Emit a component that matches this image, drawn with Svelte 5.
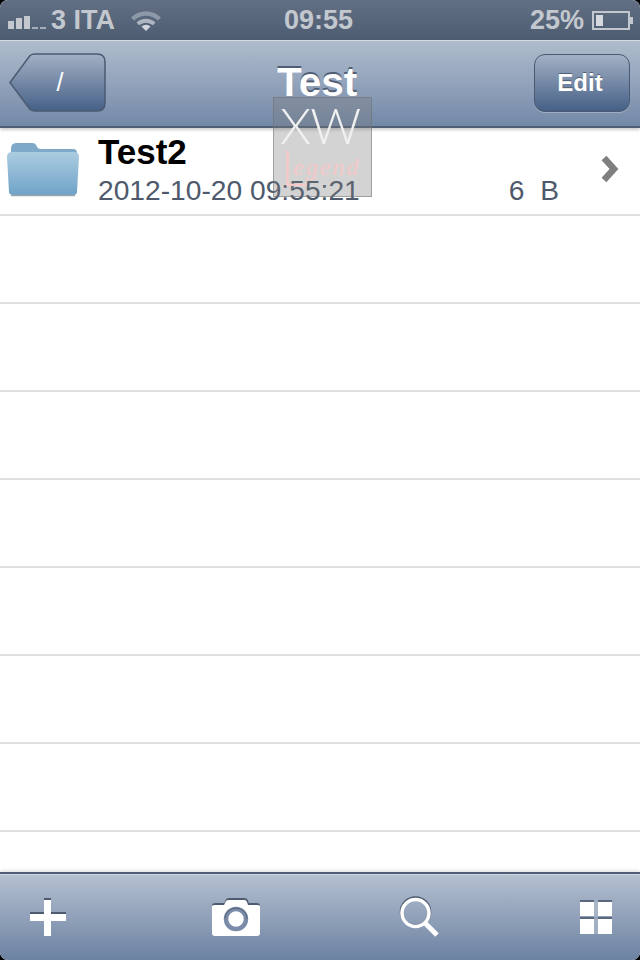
<script>
  const rows = [0, 1, 2, 3, 4, 5, 6, 7];
</script>

<div class="phone">
  <header class="status">
    <div class="side">
      <div class="signal">
        <i class="b1"></i><i class="b2"></i><i class="b3"></i><i class="b4"></i><i class="b5"></i>
      </div>
      <span class="carrier">3 ITA</span>
      <svg class="wifi" width="32" height="22" viewBox="0 0 32 22">
        <path d="M1 8.500C9.500 0 22.500 0 31 8.500L28 11.500C21 5 11 5 4 11.500Z" fill="#8e99a8"/>
        <path d="M6.500 13.500C12 8.500 20 8.500 25.500 13.500L22.800 16.300C18.500 12.800 13.500 12.800 9.200 16.300Z" fill="#aeb6c1"/>
        <path d="M11.500 17.500C14.500 15.300 17.500 15.300 20.500 17.500L16 22Z" fill="#d2d6dc"/>
      </svg>
    </div>
    <span class="clock">09:55</span>
    <div class="side right">
      <span class="pct">25%</span>
      <div class="battery"><div class="charge"></div></div>
      <div class="nub"></div>
    </div>
  </header>

  <nav class="navbar">
    <button class="back">
      <svg class="back-shape" width="98" height="60" viewBox="0 0 98 60">
        <defs>
          <linearGradient id="bg" x1="0" y1="0" x2="0" y2="1">
            <stop offset="0" stop-color="#a3b0c4"/>
            <stop offset="1" stop-color="#456087"/>
          </linearGradient>
        </defs>
        <path d="M1 29.500L21 2.500Q23 1 26 1H88Q96 1 96 9V50Q96 58 88 58H26Q23 58 21 56.500Z" fill="url(#bg)" stroke="#4b5a70" stroke-width="1.500"/>
      </svg>
      <span class="back-label">/</span>
    </button>
    <h1>Test</h1>
    <button class="edit">Edit</button>
  </nav>

  <main class="list">
    {#each rows as r}
      <div class="row">
        {#if r === 0}
          <svg class="folder" width="74" height="56" viewBox="0 0 74 56">
            <defs>
              <linearGradient id="fg" x1="0" y1="0" x2="0" y2="1">
                <stop offset="0" stop-color="#acccE0"/>
                <stop offset="1" stop-color="#6fa3c8"/>
              </linearGradient>
            </defs>
            <path d="M5 8Q5 2 10 2H26Q30 2 31 6Q32 8 35 8H67Q71 8 71 12V16H5Z" fill="#7fa9c8"/>
            <path d="M1 16Q1 11 6 11H68Q73 11 73 16L71 51Q71 54 67 54H7Q3 54 3 51Z" fill="url(#fg)"/>
            <path d="M5 54.500H69" stroke="#9aa5ae" stroke-width="1.500"/>
          </svg>
          <div class="text">
            <div class="name">Test2</div>
            <div class="meta"><span>2012-10-20 09:55:21</span><span class="size">6&nbsp;&nbsp;B</span></div>
          </div>
          <svg class="chev" width="20" height="28" viewBox="0 0 20 28">
            <path d="M4 3L14 14L4 25" fill="none" stroke="#7f7f7f" stroke-width="6.500"/>
          </svg>
        {/if}
      </div>
    {/each}
  </main>

  <footer class="toolbar">
    <svg class="tool" width="38" height="40" viewBox="0 0 38 40">
      <path d="M15 1H22V15H37V24H22V39H15V24H1V15H15Z" fill="#fff"/>
      <path d="M15 1H22V3H15ZM1 15H15V17H1ZM22 15H37V17H22Z" fill="#4d5b70"/>
    </svg>
    <svg class="tool camera" width="50" height="40" viewBox="0 0 50 40">
      <path d="M1 9Q1 6 4 6H13L15 2Q16 1 18 1H34Q36 1 37 3L38 6H46Q49 6 49 9V36Q49 39 46 39H4Q1 39 1 36Z" fill="#fff"/>
      <path d="M1 8Q1 6 4 6H13L15 2Q16 1 18 1H34Q36 1 37 3L38 6H46Q49 6 49 8V9Q49 8 46 8H37L36 5Q35 3 34 3H18Q16 3 15 4L13 8H4Q1 8 1 9Z" fill="#4d5b70"/>
      <circle cx="25" cy="22" r="10" fill="#fff" stroke="#7a8ca8" stroke-width="4.500"/>
      <path d="M14 22A11 11 0 0 1 36 22" fill="none" stroke="#55637a" stroke-width="1"/>
    </svg>
    <svg class="tool search" width="42" height="44" viewBox="0 0 42 44">
      <circle cx="16.500" cy="17" r="14" fill="none" stroke="#4d5b70" stroke-width="3.500"/>
      <circle cx="16.500" cy="18" r="13.500" fill="none" stroke="#fff" stroke-width="3.500"/>
      <path d="M26 28L38 40" stroke="#fff" stroke-width="5"/>
    </svg>
    <svg class="tool grid" width="34" height="36" viewBox="0 0 34 36">
      <path d="M1 1H15V17H1ZM19 1H33V17H19ZM1 19H15V35H1ZM19 19H33V35H19Z" fill="#fff"/>
      <path d="M1 1H15V3H1ZM19 1H33V3H19ZM1 18H15V20H1ZM19 18H33V20H19Z" fill="#5a687d"/>
      <path d="M15 3H19V18H15ZM15 20H19V35H15Z" fill="#b9c3d1" opacity="0.5"/>
    </svg>
  </footer>

  <aside class="watermark">
    <span class="xw">XW</span>
    <span class="legend"><b>L</b><span class="egend">egend</span></span>
  </aside>
</div>

<style>
  :global(body) {
    margin: 0;
    background: #000;
  }
  .phone {
    position: relative;
    width: 640px;
    height: 960px;
    display: flex;
    flex-direction: column;
    overflow: hidden;
    border-radius: 8px;
    background: #fff;
    font-family: "Liberation Sans", Arial, sans-serif;
  }
  .status {
    height: 40px;
    flex: none;
    display: grid;
    grid-template-columns: 1fr auto 1fr;
    align-items: center;
    padding: 0 7px 0 8px;
    box-sizing: border-box;
    background: linear-gradient(#626f83, #4e5c72);
    color: #c3c8cf;
    font-weight: bold;
    font-size: 27px;
  }
  .side {
    display: flex;
    align-items: center;
  }
  .right {
    justify-content: flex-end;
  }
  .signal {
    display: flex;
    align-items: flex-end;
    gap: 2px;
    height: 13px;
    margin-top: 4px;
  }
  .signal i {
    display: block;
    width: 6px;
    background: #c3c8cf;
  }
  .b1 { height: 8px; }
  .b2 { height: 11px; }
  .b3 { height: 13px; }
  .b4, .b5 { height: 2px; background: #a5adb8 !important; }
  .carrier {
    margin-left: 5px;
  }
  .wifi {
    margin-left: 15px;
    margin-top: -1px;
  }
  .clock {
    margin-left: -4px;
  }
  .pct {
    margin-right: 8px;
  }
  .battery {
    width: 38px;
    height: 19px;
    box-sizing: border-box;
    border: 2px solid #c3c8cf;
    padding: 2px;
    display: flex;
  }
  .charge {
    width: 7px;
    background: #d6dade;
  }
  .nub {
    width: 3px;
    height: 7px;
    background: #c3c8cf;
  }
  .navbar {
    height: 88px;
    flex: none;
    box-sizing: border-box;
    display: flex;
    align-items: center;
    justify-content: space-between;
    padding: 0 10px 2px 9px;
    border-top: 1px solid #d5dbe4;
    border-bottom: 2px solid #4f5e75;
    background: linear-gradient(#b0bccd, #7389a8);
    box-shadow: 0 2px 3px rgba(0, 0, 0, 0.2);
    position: relative;
    z-index: 1;
  }
  .navbar h1 {
    margin: 0;
    font-size: 40.500px;
    color: #fff;
    font-weight: bold;
    text-shadow: 0 -2px 0 #4f5e75;
    position: absolute;
    left: 277px;
    top: 18px;
    line-height: 46px;
  }
  button {
    font-family: inherit;
    padding: 0;
    border: 0;
    background: none;
    color: #fff;
  }
  .back {
    position: relative;
    width: 98px;
    height: 60px;
    display: flex;
    align-items: center;
    justify-content: center;
  }
  .back-shape {
    position: absolute;
    left: 0;
    top: 0;
  }
  .back-label {
    position: relative;
    font-size: 25px;
    font-weight: normal;
    left: 2px;
  }
  .edit {
    width: 96px;
    height: 58px;
    padding-right: 4px;
    border-radius: 11px;
    border: 1.500px solid #4b5a70;
    background: linear-gradient(#a3b0c4, #456087);
    font-size: 24px;
    font-weight: bold;
    text-shadow: 0 -1px 0 #4f5e75;
    box-shadow: 0 1px 0 rgba(255, 255, 255, 0.25);
  }
  .list {
    flex: 1;
    min-height: 0;
    overflow: hidden;
  }
  .row {
    height: 88px;
    box-sizing: border-box;
    border-bottom: 2px solid #dfdfdf;
    display: flex;
    align-items: center;
    position: relative;
    padding-left: 6px;
  }
  .folder {
    flex: none;
    margin-top: -5px;
  }
  .text {
    margin-left: 18px;
    width: 461px;
    margin-top: -1px;
  }
  .name {
    font-size: 35px;
    font-weight: bold;
    color: #000;
    line-height: 40px;
  }
  .meta {
    font-size: 28.200px;
    color: #4e5a6c;
    line-height: 37px;
    display: flex;
    justify-content: space-between;
  }
  .chev {
    margin-left: 41px;
    margin-top: -4px;
  }
  .toolbar {
    height: 88px;
    flex: none;
    box-sizing: border-box;
    display: flex;
    align-items: center;
    padding: 0 0 0 29px;
    border-top: 2px solid #4f5e75;
    background: linear-gradient(#b5c0d0, #6c82a2);
    box-shadow: inset 0 1px 0 #cfd6e0, 0 -2px 3px rgba(0, 0, 0, 0.1);
    position: relative;
  }
  .camera { margin-left: 144px; }
  .search { margin-left: 138px; }
  .grid { margin-left: 138px; }
  .watermark {
    position: absolute;
    left: 273px;
    top: 97px;
    width: 99px;
    height: 100px;
    box-sizing: border-box;
    border: 1px solid rgba(110, 110, 110, 0.5);
    background: rgba(120, 120, 120, 0.33);
    z-index: 2;
  }
  .xw {
    position: absolute;
    left: 6px;
    top: 2px;
    font-family: Lato, sans-serif;
    font-weight: 300;
    font-size: 50px;
    line-height: 50px;
    color: #f0f0f0;
    letter-spacing: -1px;
    white-space: nowrap;
  }
  .legend {
    position: absolute;
    left: 7px;
    top: 46px;
    height: 46px;
    display: flex;
    align-items: flex-end;
    color: #f7c8c8;
  }
  .legend b {
    font-family: Lato, sans-serif;
    font-size: 50px;
    font-weight: 300;
    line-height: 46px;
  }
  .egend {
    font-family: "Liberation Serif", serif;
    font-style: italic;
    font-size: 24px;
    line-height: 30px;
    letter-spacing: 2px;
    margin-left: -13px;
    margin-bottom: 8px;
  }
</style>
